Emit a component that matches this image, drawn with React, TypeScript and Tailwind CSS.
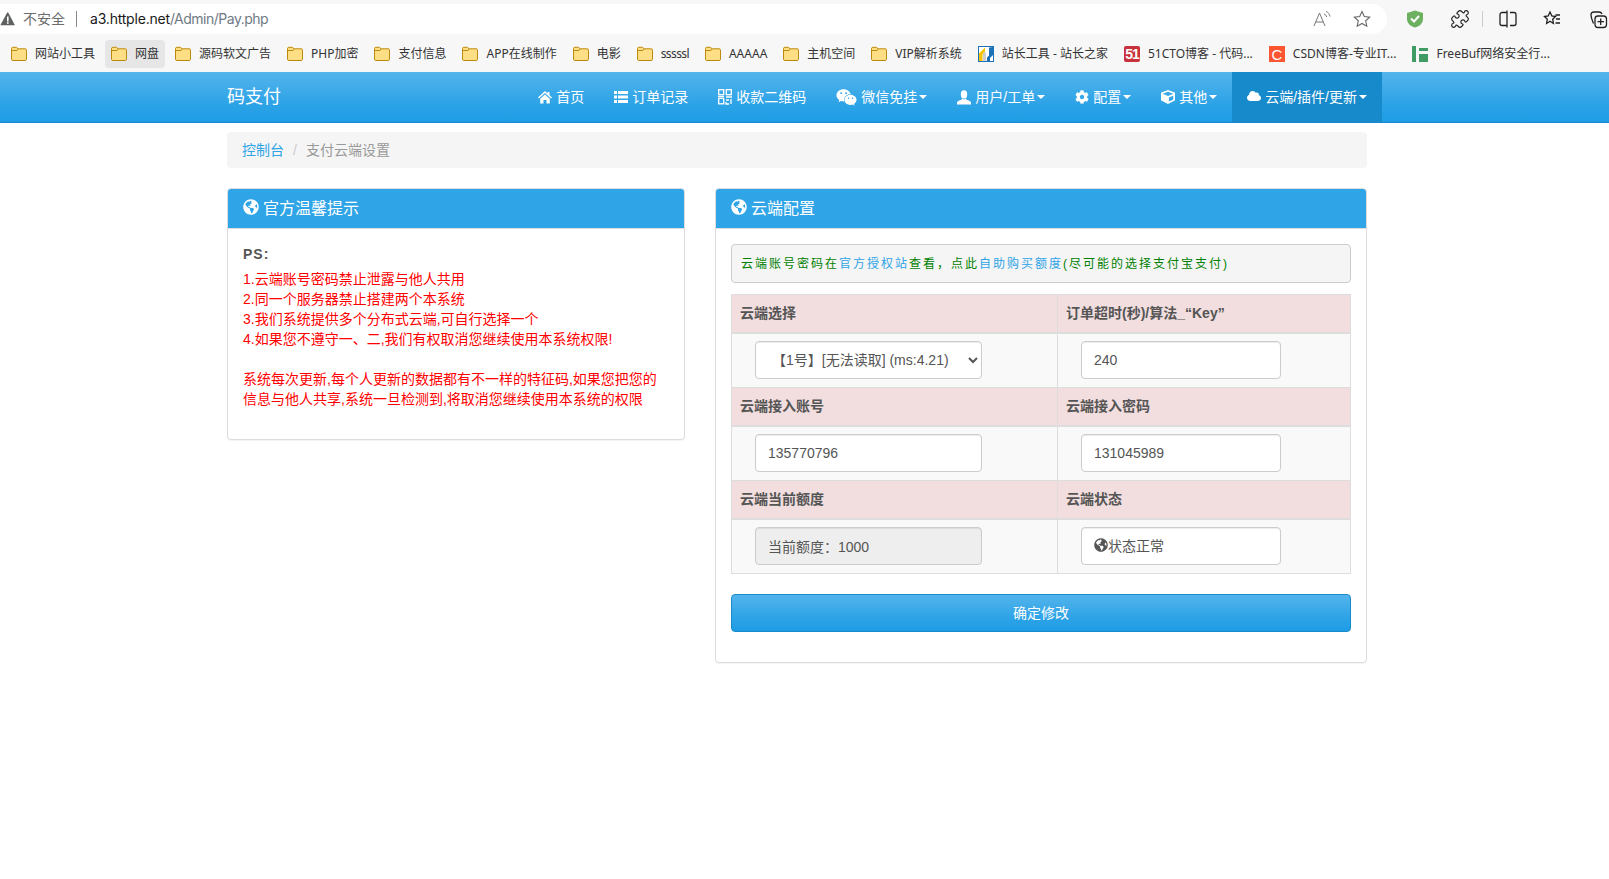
import React from 'react';
import { FaCloud, FaCog, FaCube, FaGlobeAmericas, FaWeixin } from 'react-icons/fa';
import { Puzzle } from 'lucide-react';

const Folder = () => (
  <svg width="16" height="16" viewBox="0 0 16 16" className="shrink-0">
    <path
      d="M.5 2.600C.5 1.800 1.100 1.300 1.800 1.300h3.700l1.600 1.500h7c.800 0 1.400.600 1.400 1.300v9.100c0 .800-.600 1.300-1.400 1.300H1.900c-.800 0-1.400-.500-1.400-1.300V2.600Z"
      fill="#ffdf85"
      stroke="#bb8a0c"
      strokeWidth="1"
    />
    <path d="M1 4.500h5l1.100-1.500" fill="none" stroke="#bb8a0c" strokeWidth="1" />
  </svg>
);

const ChinazLogo = () => (
  <svg width="16" height="16" viewBox="0 0 16 16" className="shrink-0">
    <rect x="0.500" y="0.500" width="15" height="15" fill="#fff" stroke="#1d71b8" />
    <path d="M1 7.500 7 1.500V6L4.500 8.500V15H1Z" fill="#f5c400" />
    <rect x="5" y="6.500" width="3" height="8.500" fill="#cfcfcf" />
    <path d="M9 15v-3.500l2-2V1.500l4-.500V9l-3 3v3Z" fill="#1d71b8" />
  </svg>
);

const CtoLogo = () => (
  <span className="flex h-4 w-4 shrink-0 items-center justify-center rounded-[2px] bg-[#c8323c] font-['Liberation_Sans',sans-serif] text-[14px] leading-none font-bold tracking-[-1px] text-white">
    51
  </span>
);

const CsdnLogo = () => (
  <span className="flex h-4 w-4 shrink-0 items-center justify-center bg-[#fc5531] font-['Liberation_Sans',sans-serif] text-[15px] leading-none text-white">
    C
  </span>
);

const FreebufLogo = () => (
  <svg width="16" height="16" viewBox="0 0 16 16" className="shrink-0">
    <rect x="0" y="0" width="4" height="16" fill="#3f9b63" />
    <rect x="7" y="2" width="9" height="3" fill="#3f9b63" />
    <rect x="7" y="8" width="9" height="8" fill="#3f9b63" />
  </svg>
);

const bookmarks: { label: string; icon?: React.ReactNode; active?: boolean }[] = [
  { label: '网站小工具' },
  { label: '网盘', active: true },
  { label: '源码软文广告' },
  { label: 'PHP加密' },
  { label: '支付信息' },
  { label: 'APP在线制作' },
  { label: '电影' },
  { label: 'sssssl' },
  { label: 'AAAAA' },
  { label: '主机空间' },
  { label: 'VIP解析系统' },
  { label: '站长工具 - 站长之家', icon: <ChinazLogo /> },
  { label: '51CTO博客 - 代码...', icon: <CtoLogo /> },
  { label: 'CSDN博客-专业IT...', icon: <CsdnLogo /> },
  { label: 'FreeBuf网络安全行...', icon: <FreebufLogo /> },
];

const BrowserBar = () => (
  <div className="bg-[#f7f7f7] font-['Noto_Sans','Noto_Sans_CJK_SC',sans-serif]">
    <div className="flex h-[38px] items-center py-[4px]">
      <div className="flex h-[30px] w-[1388px] items-center rounded-r-[15px] bg-white">
        <svg width="16" height="16" viewBox="0 0 16 16" className="shrink-0">
          <path d="M7.200 1.500.3 14.200h14.600L8.200 1.500Z" fill="#5f6060" />
          <rect x="7" y="5.500" width="1.600" height="5" fill="#fff" />
          <rect x="7" y="11.200" width="1.600" height="1.600" fill="#fff" />
        </svg>
        <span className="ml-[7px] -translate-y-px text-[14px] text-[#6b6b6b]">不安全</span>
        <span className="ml-[11px] h-[16px] w-px bg-[#888]" />
        <span className="ml-[13px] -translate-y-px font-['Inter','Noto_Sans_CJK_SC',sans-serif] text-[14px] tracking-[-0.2px] text-[#1a1a1a]">
          a3.httple.net<span className="tracking-[-0.5px] text-[#6f7a84]">/Admin/Pay.php</span>
        </span>
        <div className="ml-auto mr-[15px] flex items-center gap-[20px]">
          <svg width="20" height="20" viewBox="0 0 20 20" fill="none" stroke="#777" strokeWidth="1">
            <path d="M2 17 7.500 4 13 17M4 13h7" />
            <path d="M12 5c1.500.500 2.300 1.500 2.600 3M14 2.500c2.300.800 3.600 2.500 4 5" />
          </svg>
          <svg width="20" height="20" viewBox="0 0 20 20" fill="none" stroke="#666" strokeWidth="1.100">
            <path d="m10 2.500 2.300 5 5.400.6-4 3.700 1.100 5.400L10 14.500l-4.800 2.700 1.100-5.400-4-3.700 5.400-.6Z" />
          </svg>
        </div>
      </div>
      <div className="ml-[18px] flex items-center">
        <svg width="20" height="20" viewBox="0 0 20 20">
          <path d="M10 1.500 18 4v6c0 4.500-3.500 7.300-8 8.500C5.500 17.300 2 14.500 2 10V4Z" fill="#6cb060" />
          <path d="m6 9.500 3 3 5-5.500" fill="none" stroke="#fff" strokeWidth="2" />
        </svg>
        <Puzzle size={20} strokeWidth={1.400} className="ml-[25px] text-[#222]" />
        <span className="ml-[12px] h-[16px] w-px bg-[#ccc]" />
        <svg width="20" height="20" viewBox="0 0 20 20" fill="none" stroke="#222" strokeWidth="1.300" className="ml-[15px]">
          <path d="M9 3.500H4a2 2 0 0 0-2 2v9a2 2 0 0 0 2 2h5M9 1.500v17M12 3.500h4a2 2 0 0 1 2 2v9a2 2 0 0 1-2 2h-4" />
        </svg>
        <svg width="20" height="20" viewBox="0 0 20 20" fill="none" stroke="#222" strokeWidth="1.300" className="ml-[24px]">
          <path d="m8 3 1.800 4 3.700.500-2.800 2.700.7 4.300L8 12.300 4.600 14.500l.7-4.300L2.500 7.500 6.200 7ZM13.500 6h4.500M14 10h4M13.500 14H18" />
        </svg>
        <svg width="20" height="20" viewBox="0 0 20 20" fill="none" stroke="#222" strokeWidth="1.300" className="ml-[27px]">
          <path d="M4.500 14.500C3 11 2 9 2 6c0-2 1-3 3-3h5c1.500 0 2.500.700 3 2" />
          <rect x="6" y="7" width="11.500" height="11.500" rx="3" />
          <path d="M11.700 9.500v6.500M8.500 12.700h6.500" />
        </svg>
      </div>
    </div>
    <div className="flex h-[34px] items-start gap-[4px] pt-[2px] pl-[5px] text-[12px] text-[#333]">
      {bookmarks.map((item) => (
        <div
          key={item.label}
          className={`flex h-[28px] items-center gap-[8px] rounded-[4px] px-[6px] whitespace-nowrap ${
            item.active ? 'bg-[#e6e6e6]' : ''
          }`}
        >
          {item.icon ?? <Folder />}
          <span className={item.label === 'sssssl' ? 'tracking-[-0.6px]' : ''}>{item.label}</span>
        </div>
      ))}
    </div>
  </div>
);

const HomeIcon = () => (
  <svg width="14" height="14" viewBox="0 0 14 14" fill="currentColor">
    <path d="M7 1 0 7.500l.9 1L7 3l6.100 5.500.9-1-2.500-2.300V2h-2v1.400Z" />
    <path d="M2.200 8.700 7 4.500l4.800 4.200V13.500H8.500V10h-3v3.500H2.200Z" />
  </svg>
);

const ListIcon = () => (
  <svg width="14" height="14" viewBox="0 0 14 14" fill="currentColor">
    <path d="M0 1h3v3H0ZM4 1h10v3H4ZM0 5.500h3v3H0ZM4 5.500h10v3H4ZM0 10h3v3H0ZM4 10h10v3H4Z" />
  </svg>
);

const QrIcon = () => (
  <svg width="14" height="16" viewBox="0 0 14 16" fill="none" stroke="currentColor" strokeWidth="1.300">
    <rect x="0.700" y="0.700" width="5" height="5" />
    <rect x="8.300" y="0.700" width="5" height="5" />
    <rect x="0.700" y="9.300" width="5" height="5.500" />
    <path d="M8 8h6M8 11h3M13 10v5M8 13v2h3" />
    <path d="M0 7.500h6" />
  </svg>
);

const UserIcon = () => (
  <svg width="14" height="15" viewBox="0 0 14 15" fill="currentColor">
    <ellipse cx="7" cy="4.400" rx="3.200" ry="4.200" />
    <path d="M5 8.500c.6 1 3.400 1 4 0l.5 1.300c2.500.500 4.500 1.500 4.500 3V14.500H0v-1.700c0-1.500 2-2.500 4.500-3Z" />
  </svg>
);

const Caret = () => (
  <span className="ml-[2px] inline-block h-0 w-0 border-x-[4px] border-t-[4px] border-x-transparent border-t-white align-middle" />
);

const navItems = [
  { label: '首页', icon: <HomeIcon /> },
  { label: '订单记录', icon: <ListIcon /> },
  { label: '收款二维码', icon: <QrIcon /> },
  { label: '微信免挂', icon: <FaWeixin className="text-[21px]" />, caret: true },
  { label: '用户/工单', icon: <UserIcon />, caret: true },
  { label: '配置', icon: <FaCog className="text-[14px]" />, caret: true },
  { label: '其他', icon: <FaCube className="text-[14px]" />, caret: true },
];

const NavBar = () => (
  <div className="h-[51px] border-b border-[#178acc] bg-[linear-gradient(#54b4eb,#2fa4e7_60%,#1d9ce5)]">
    <div className="ml-[212px] flex h-[50px] w-[1170px] items-center pl-[15px] text-white">
      <span className="text-[18px]">码支付</span>
      <div className="ml-auto flex h-full items-stretch text-[14px]">
        {navItems.map((item) => (
          <div key={item.label} className="flex items-center gap-[4px] px-[15px]">
            {item.icon}
            <span className="flex items-center">
              {item.label}
              {item.caret && <Caret />}
            </span>
          </div>
        ))}
        <div className="flex items-center gap-[4px] bg-[#178acc] px-[15px]">
          <FaCloud className="-mt-[3px] text-[14px]" />
          <span className="flex items-center">
            云端/插件/更新
            <Caret />
          </span>
        </div>
      </div>
    </div>
  </div>
);

const PanelHeading = ({ title }: { title: string }) => (
  <div className="flex h-[40px] items-center gap-[4px] rounded-t-[3px] border-b border-[#ddd] bg-[#2fa4e7] px-[15px] text-[16px] text-white">
    <FaGlobeAmericas className="-mt-[3px] text-[16px]" />
    <span>{title}</span>
  </div>
);

const TipsPanel = () => (
  <div className="h-[252px] rounded-[4px] border border-[#ddd] bg-white shadow-[0_1px_1px_rgba(0,0,0,0.05)]">
    <PanelHeading title="官方温馨提示" />
    <div className="px-[15px] pt-[15px] text-[14px] leading-[20px] text-[#ff0000]">
      <p className="mb-[5px] font-bold tracking-[1px] text-[#555]">PS:</p>
      <p>1.云端账号密码禁止泄露与他人共用</p>
      <p>2.同一个服务器禁止搭建两个本系统</p>
      <p>3.我们系统提供多个分布式云端,可自行选择一个</p>
      <p>4.如果您不遵守一、二,我们有权取消您继续使用本系统权限!</p>
      <p className="mt-[20px]">系统每次更新,每个人更新的数据都有不一样的特征码,如果您把您的</p>
      <p>信息与他人共享,系统一旦检测到,将取消您继续使用本系统的权限</p>
    </div>
  </div>
);

const fieldClass =
  'block h-[38px] rounded-[4px] border border-[#ccc] text-[14px] text-[#555] shadow-[inset_0_1px_1px_rgba(0,0,0,0.075)] outline-none';

const HeadRow = ({ left, right }: { left: string; right: string }) => (
  <tr className="bg-[#f2dede]">
    <th className="h-[38px] border border-b-2 border-[#ddd] px-[8px] text-left font-bold">{left}</th>
    <th className="h-[38px] border border-b-2 border-[#ddd] px-[8px] text-left font-bold">{right}</th>
  </tr>
);

const ValueRow = ({ left, right }: { left: React.ReactNode; right: React.ReactNode }) => (
  <tr className="bg-[#f9f9f9]">
    <td className="h-[55px] border border-[#ddd] pl-[23px]">{left}</td>
    <td className="h-[55px] border border-[#ddd] pl-[23px]">{right}</td>
  </tr>
);

const CloudPanel = () => (
  <div className="h-[475px] rounded-[4px] border border-[#ddd] bg-white shadow-[0_1px_1px_rgba(0,0,0,0.05)]">
    <PanelHeading title="云端配置" />
    <div className="px-[15px] pt-[15px]">
      <div className="flex h-[39px] items-center rounded-[4px] border border-[#ccc] bg-[#f5f5f5] px-[9px] text-[12px] tracking-[2px] text-[#008000]">
        <span>
          云端账号密码在<span className="text-[#2fa4e7]">官方授权站</span>查看，点此
          <span className="text-[#2fa4e7]">自助购买额度</span>(尽可能的选择支付宝支付)
        </span>
      </div>
      <table className="mt-[11px] w-[619px] table-fixed border-collapse text-[14px] text-[#555]">
        <colgroup>
          <col className="w-[326px]" />
          <col className="w-[293px]" />
        </colgroup>
        <tbody>
          <HeadRow left="云端选择" right="订单超时(秒)/算法_“Key”" />
          <ValueRow
            left={
              <select defaultValue="1" className={`${fieldClass} w-[227px] bg-white px-[12px]`}>
                <option value="1">【1号】[无法读取] (ms:4.21)</option>
              </select>
            }
            right={<input readOnly value="240" className={`${fieldClass} w-[200px] bg-white px-[12px]`} />}
          />
          <HeadRow left="云端接入账号" right="云端接入密码" />
          <ValueRow
            left={<input readOnly value="135770796" className={`${fieldClass} w-[227px] bg-white px-[12px]`} />}
            right={<input readOnly value="131045989" className={`${fieldClass} w-[200px] bg-white px-[12px]`} />}
          />
          <HeadRow left="云端当前额度" right="云端状态" />
          <ValueRow
            left={
              <input
                disabled
                value="当前额度：1000"
                className={`${fieldClass} w-[227px] bg-[#eee] px-[12px] opacity-100`}
              />
            }
            right={
              <div className={`${fieldClass} flex w-[200px] items-center bg-white px-[12px]`}>
                <FaGlobeAmericas className="-mt-[3px] text-[14px]" />
                <span>状态正常</span>
              </div>
            }
          />
        </tbody>
      </table>
      <button
        type="button"
        className="mt-[20px] h-[38px] w-[620px] rounded-[4px] border border-[#178acc] bg-[linear-gradient(#54b4eb,#2fa4e7_60%,#1d9ce5)] text-[14px] text-white"
      >
        确定修改
      </button>
    </div>
  </div>
);

export default function App() {
  return (
    <div className="min-h-[879px] bg-white font-['Liberation_Sans','Noto_Sans_CJK_SC',sans-serif] text-[14px] text-[#555]">
      <BrowserBar />
      <NavBar />
      <div className="ml-[212px] w-[1170px] px-[15px] pt-[9px]">
        <div className="flex h-[36px] items-center rounded-[4px] bg-[#f5f5f5] px-[15px]">
          <span className="text-[#2fa4e7]">控制台</span>
          <span className="px-[9px] text-[#ccc]">/</span>
          <span className="text-[#999]">支付云端设置</span>
        </div>
        <div className="mt-[20px] flex gap-[30px]">
          <div className="w-[458px]">
            <TipsPanel />
          </div>
          <div className="w-[652px]">
            <CloudPanel />
          </div>
        </div>
      </div>
    </div>
  );
}
